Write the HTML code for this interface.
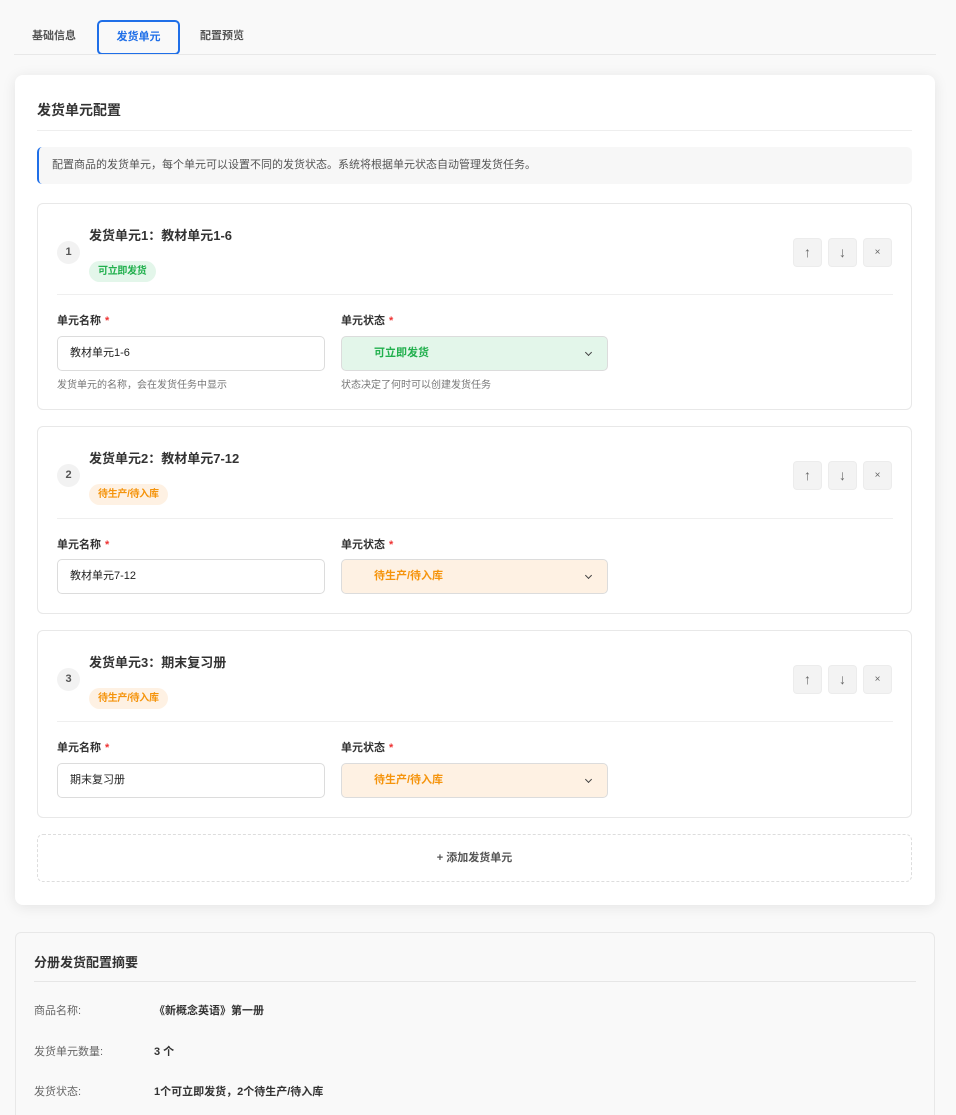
<!DOCTYPE html>
<html><head><meta charset="utf-8"><style>
*{box-sizing:border-box;margin:0;padding:0}
html,body{width:956px;height:1115px;overflow:hidden}
body{background:#f9f9f9;font-family:"Liberation Sans","Noto Sans CJK SC",sans-serif;color:#333;position:relative}
.a{position:absolute}
.tab{position:absolute;top:20px;height:35px;font-size:11px;font-weight:bold;color:#555;line-height:33px;text-align:center}
.card{position:absolute;left:15px;top:75px;width:920px;height:830px;background:#fff;border-radius:8px;box-shadow:0 2px 14px rgba(0,0,0,.09)}
.unit{position:absolute;left:37px;width:875px;border:1px solid #e8e8e8;border-radius:6px;background:#fff}
.num{position:absolute;left:19px;width:23px;height:23px;border-radius:50%;background:#f2f2f2;font-size:11px;font-weight:bold;color:#555;text-align:center;line-height:23px}
.ut{position:absolute;left:51px;font-size:13px;font-weight:bold;color:#333}
.badge{position:absolute;left:51px;height:21px;border-radius:11px;font-size:10px;font-weight:bold;line-height:21px;padding:0 9px 0 9px;letter-spacing:-0.3px}
.g{background:#e3f6ea;color:#22b04e}
.o{background:#fef1e3;color:#f5940c}
.btn{position:absolute;width:29px;height:29px;background:#f3f3f3;border:1px solid #ececec;border-radius:4px;font-size:14px;color:#666;text-align:center;line-height:27px}
.hr{position:absolute;left:19px;width:836px;height:1px;background:#efefef}
.lbl{position:absolute;font-size:11px;font-weight:bold;color:#333}
.lbl b{color:#e33;margin-left:4px}
.inp{position:absolute;left:19px;width:268px;height:35px;border:1px solid #dcdcdc;border-radius:5px;font-size:11px;line-height:33px;padding-left:12px;color:#222}
.sel{position:absolute;left:303px;width:267px;height:35px;border:1px solid #dcdcdc;border-radius:5px;font-size:11px;font-weight:bold;line-height:33px;padding-left:32px}
.sel i{position:absolute;right:16px;top:13px;width:5px;height:5px;border-right:1.2px solid #444;border-bottom:1.2px solid #444;transform:rotate(45deg)}
.help{position:absolute;font-size:10px;color:#777}
.sr{position:absolute;left:34px;font-size:11px;color:#666}
.sv{position:absolute;left:154px;font-size:11px;font-weight:bold;color:#333}
</style></head><body>
<div class="tab" style="left:14px;width:80px">基础信息</div>
<div class="tab" style="left:97px;width:83px;border:2px solid #1f6fe8;border-radius:5px;color:#1f6fe8;line-height:31px">发货单元</div>
<div class="tab" style="left:182px;width:80px">配置预览</div>
<div class="a" style="left:14px;top:54px;width:922px;height:1px;background:#e8e8e8"></div>

<div class="card">
<div class="a" style="left:22px;top:25px;font-size:14px;font-weight:bold;color:#333">发货单元配置</div>
<div class="a" style="left:22px;top:55px;width:875px;height:1px;background:#eee"></div>
<div class="a" style="left:22px;top:72px;width:875px;height:37px;background:#f7f7f7;border-left:2px solid #1f6fe8;border-radius:5px;font-size:11px;color:#555;line-height:36px;padding-left:13px">配置商品的发货单元，每个单元可以设置不同的发货状态。系统将根据单元状态自动管理发货任务。</div>
</div>

<div class="unit" style="top:203px;height:207px">
<div class="num" style="top:37px">1</div>
<div class="ut" style="top:21px">发货单元1：教材单元1-6</div>
<div class="badge g" style="top:57px">可立即发货</div>
<div class="btn" style="left:755px;top:34px">↑</div><div class="btn" style="left:790px;top:34px">↓</div><div class="btn" style="left:825px;top:34px;font-size:10px">×</div>
<div class="hr" style="top:90px"></div>
<div class="lbl" style="left:19px;top:108px">单元名称<b>*</b></div>
<div class="lbl" style="left:303px;top:108px">单元状态<b>*</b></div>
<div class="inp" style="top:132px">教材单元1-6</div>
<div class="sel g" style="top:132px">可立即发货<i></i></div>
<div class="help" style="left:19px;top:172px">发货单元的名称，会在发货任务中显示</div>
<div class="help" style="left:303px;top:172px">状态决定了何时可以创建发货任务</div>
</div>

<div class="unit" style="top:426px;height:188px">
<div class="num" style="top:37px">2</div>
<div class="ut" style="top:21px">发货单元2：教材单元7-12</div>
<div class="badge o" style="top:57px">待生产/待入库</div>
<div class="btn" style="left:755px;top:34px">↑</div><div class="btn" style="left:790px;top:34px">↓</div><div class="btn" style="left:825px;top:34px;font-size:10px">×</div>
<div class="hr" style="top:91px"></div>
<div class="lbl" style="left:19px;top:109px">单元名称<b>*</b></div>
<div class="lbl" style="left:303px;top:109px">单元状态<b>*</b></div>
<div class="inp" style="top:132px">教材单元7-12</div>
<div class="sel o" style="top:132px">待生产/待入库<i></i></div>
</div>

<div class="unit" style="top:630px;height:188px">
<div class="num" style="top:37px">3</div>
<div class="ut" style="top:21px">发货单元3：期末复习册</div>
<div class="badge o" style="top:57px">待生产/待入库</div>
<div class="btn" style="left:755px;top:34px">↑</div><div class="btn" style="left:790px;top:34px">↓</div><div class="btn" style="left:825px;top:34px;font-size:10px">×</div>
<div class="hr" style="top:90px"></div>
<div class="lbl" style="left:19px;top:108px">单元名称<b>*</b></div>
<div class="lbl" style="left:303px;top:108px">单元状态<b>*</b></div>
<div class="inp" style="top:132px">期末复习册</div>
<div class="sel o" style="top:132px">待生产/待入库<i></i></div>
</div>

<div class="a" style="left:37px;top:834px;width:875px;height:48px;border:1px dashed #ddd;border-radius:6px;font-size:11px;font-weight:bold;color:#555;text-align:center;line-height:46px">+ 添加发货单元</div>

<div class="a" style="left:15px;top:932px;width:920px;height:200px;border:1px solid #e8e8e8;border-radius:6px;background:#f9f9f9"></div>
<div class="a" style="left:34px;top:952px;font-size:13px;font-weight:bold;color:#333">分册发货配置摘要</div>
<div class="a" style="left:34px;top:981px;width:882px;height:1px;background:#e6e6e6"></div>
<div class="sr" style="top:1002px">商品名称:</div><div class="sv" style="top:1002px">《新概念英语》第一册</div>
<div class="sr" style="top:1043px">发货单元数量:</div><div class="sv" style="top:1043px">3 个</div>
<div class="sr" style="top:1083px">发货状态:</div><div class="sv" style="top:1083px">1个可立即发货，2个待生产/待入库</div>
</body></html>
